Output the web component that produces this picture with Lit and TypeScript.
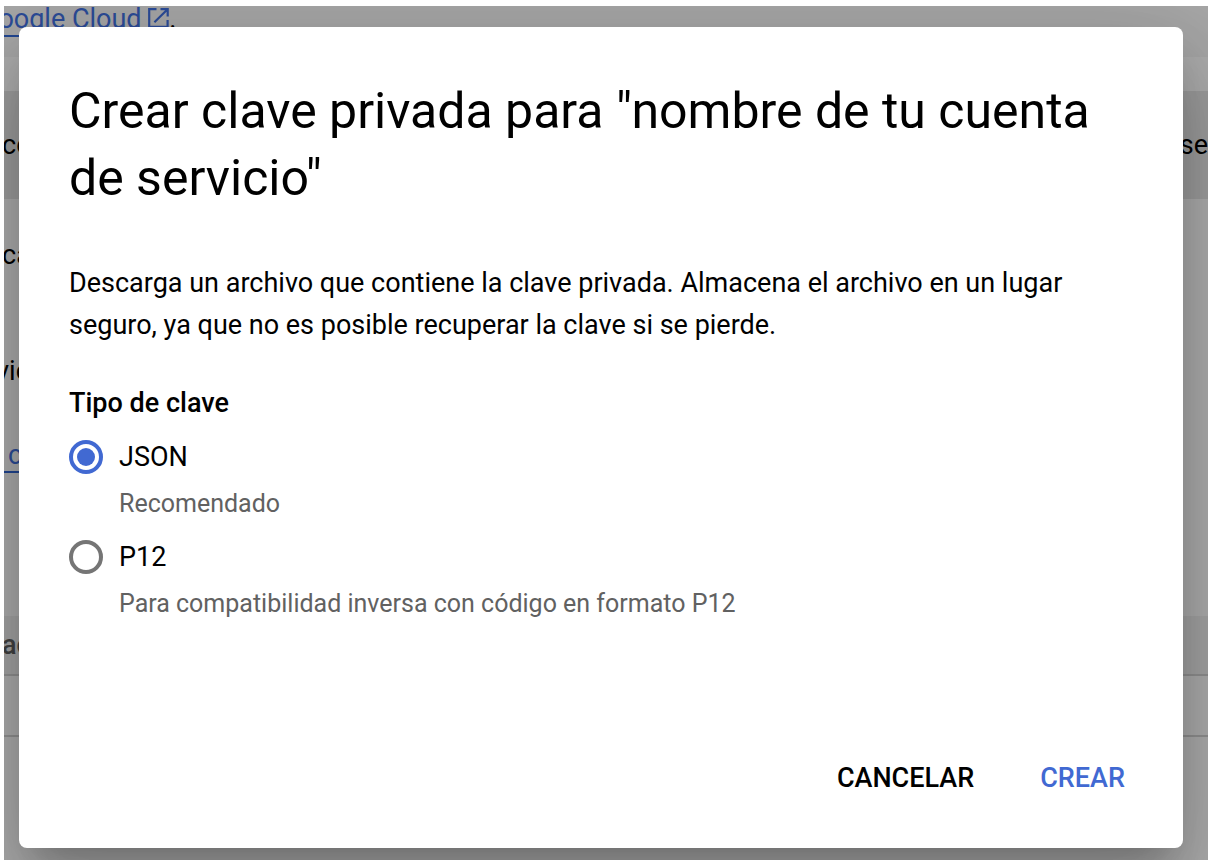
import { LitElement, html, css } from "lit";
import { customElement, state } from "lit/decorators.js";

@customElement("console-page")
class ConsolePage extends LitElement {
  static styles = css`
    :host {
      display: flex;
      flex-direction: column;
      min-height: 100%;
      background: #fff;
      color: #000;
      font-size: 27px;
      line-height: 32px;
      text-indent: -2px;
      white-space: nowrap;
    }
    .intro {
      box-sizing: border-box;
      height: 51px;
      background: #f7f7f7;
      line-height: 26px;
      text-indent: -24px;
    }
    a {
      color: #4270e0;
      text-decoration: none;
      border-bottom: 2px solid #3367d6;
    }
    .external {
      width: 21px;
      height: 20px;
      vertical-align: 0;
    }
    .spacer {
      height: 34px;
    }
    .banner {
      height: 108px;
      background: #e8e8e8;
      display: flex;
      align-items: center;
      justify-content: space-between;
    }
    .line {
      height: 112px;
      display: flex;
      align-items: center;
    }
    .state {
      height: 120px;
      text-indent: -8px;
    }
    .more {
      box-sizing: border-box;
      height: 185px;
      padding-top: 8px;
    }
    .more a {
      padding-left: 6px;
    }
    .head {
      height: 58px;
      display: flex;
      align-items: center;
      background: #f2f2f2;
      color: #616161;
      font-weight: 500;
      border-bottom: 2px solid #d5d5d5;
    }
    .row {
      height: 59px;
      border-bottom: 2px solid #d5d5d5;
    }
  `;

  render() {
    return html`
      <div class="intro">
        <a href="#cloud"
          >Google Cloud
          <svg class="external" viewBox="0 0 21 20" fill="none" stroke="currentColor" stroke-width="2.2" aria-hidden="true">
            <path d="M8.5 1.2H1.2v17.6h18.4V12M12.5 1.2h7.2v7.2M19.6 1.3 6.4 14.2" /></svg></a
        ><span>.</span>
      </div>
      <div class="spacer"></div>
      <div class="banner"><span>co</span><span>se</span></div>
      <div class="line">ca</div>
      <div class="line state">vic</div>
      <div class="more"><a href="#more">c</a></div>
      <div class="head">ac</div>
      <div class="row"></div>
    `;
  }
}

@customElement("key-dialog")
class KeyDialog extends LitElement {
  static styles = css`
    :host {
      display: block;
      background: #fff;
      color: #000;
      border-radius: 8px;
      box-shadow:
        0 23px 31px -15px rgba(0, 0, 0, 0.2),
        0 50px 79px 6px rgba(0, 0, 0, 0.14),
        0 19px 96px 17px rgba(0, 0, 0, 0.12);
    }
    form {
      height: 100%;
      display: flex;
      flex-direction: column;
      box-sizing: border-box;
      padding: 51px 42px 33px 50px;
    }
    h1 {
      margin: 0 0 50px;
      font-size: 50px;
      line-height: 67px;
      font-weight: 400;
    }
    p {
      margin: 0 0 36px;
      font-size: 27px;
      line-height: 42px;
    }
    fieldset {
      border: 0;
      margin: 0;
      padding: 0;
      display: flex;
      flex-direction: column;
      gap: 15px;
    }
    legend {
      padding: 0;
      margin-bottom: 12px;
      font-size: 27px;
      line-height: 42px;
      font-weight: 500;
    }
    .option {
      display: grid;
      grid-template-columns: 34px 1fr;
      column-gap: 16px;
      row-gap: 9px;
      align-items: center;
    }
    input {
      appearance: none;
      box-sizing: border-box;
      width: 34px;
      height: 34px;
      margin: 0;
      border: 4px solid #757575;
      border-radius: 50%;
      display: grid;
      place-content: center;
    }
    input:checked {
      border-color: #4169d2;
    }
    input:checked::before {
      content: "";
      width: 18px;
      height: 18px;
      border-radius: 50%;
      background: #4169d2;
    }
    label {
      font-size: 27px;
      line-height: 42px;
    }
    .hint {
      grid-column: 2;
      font-size: 25px;
      line-height: 34px;
      color: #616161;
    }
    .actions {
      margin-top: auto;
      display: flex;
      justify-content: flex-end;
      gap: 34px;
    }
    button {
      font: inherit;
      font-size: 27px;
      line-height: 42px;
      font-weight: 500;
      border: 0;
      padding: 16px;
      background: none;
      color: #000;
      text-transform: uppercase;
    }
    .primary {
      color: #4169d2;
    }
  `;

  @state() private keyType = "json";

  private types = [
    { id: "json", name: "JSON", hint: "Recomendado" },
    { id: "p12", name: "P12", hint: "Para compatibilidad inversa con código en formato P12" },
  ];

  render() {
    return html`
      <form role="dialog" aria-labelledby="title" @submit=${(e: Event) => e.preventDefault()}>
        <h1 id="title">Crear clave privada para "nombre de tu cuenta de servicio"</h1>
        <p>
          Descarga un archivo que contiene la clave privada. Almacena el archivo en un lugar seguro,
          ya que no es posible recuperar la clave si se pierde.
        </p>
        <fieldset>
          <legend>Tipo de clave</legend>
          ${this.types.map(
            (t) => html`
              <div class="option">
                <input
                  type="radio"
                  name="type"
                  id=${t.id}
                  aria-describedby="${t.id}-hint"
                  .checked=${this.keyType === t.id}
                  @change=${() => (this.keyType = t.id)}
                />
                <label for=${t.id}>${t.name}</label>
                <div class="hint" id="${t.id}-hint">${t.hint}</div>
              </div>
            `
          )}
        </fieldset>
        <div class="actions">
          <button type="button">Cancelar</button>
          <button type="submit" class="primary">Crear</button>
        </div>
      </form>
    `;
  }
}

@customElement("app-root")
class AppRoot extends LitElement {
  static styles = css`
    :host {
      display: block;
      box-sizing: border-box;
      height: 100vh;
      padding: 6px 6px 8px 4px;
      background: #fff;
      font-family: Roboto, "Liberation Sans", sans-serif;
    }
    .scene {
      position: relative;
      height: 100%;
      overflow: hidden;
    }
    .backdrop {
      position: absolute;
      inset: 0;
      box-sizing: border-box;
      display: grid;
      padding: 21px 25px 12px 15px;
      background: rgba(0, 0, 0, 0.32);
    }
  `;

  render() {
    return html`
      <div class="scene">
        <console-page></console-page>
        <div class="backdrop"><key-dialog></key-dialog></div>
      </div>
    `;
  }
}
